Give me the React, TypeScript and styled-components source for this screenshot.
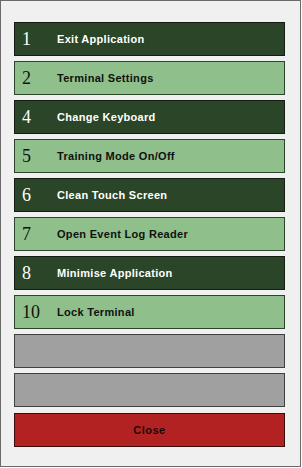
import React from 'react'
import styled, { createGlobalStyle } from 'styled-components'

const GlobalStyle = createGlobalStyle`
  html, body {
    margin: 0;
    padding: 0;
    background: #ffffff;
  }
`

type Tone = 'dark' | 'light' | 'empty'

const tones = {
  dark: { bg: '#2a4528', border: '#131d12', color: '#ffffff' },
  light: { bg: '#8fbf8b', border: '#2c442a', color: '#111111' },
  empty: { bg: '#a0a0a0', border: '#404040', color: '#111111' },
}

const Frame = styled.div`
  box-sizing: border-box;
  width: 301px;
  height: 467px;
  border: 1px solid #6a6a6a;
  background: #f0f0f0;
  padding: 21px 15px 0 13px;
  display: flex;
  flex-direction: column;
  gap: 5px;
`

const MenuButton = styled.div<{ $tone: Tone }>`
  box-sizing: border-box;
  height: 34px;
  display: flex;
  align-items: center;
  background: ${({ $tone }) => tones[$tone].bg};
  border: 1px solid ${({ $tone }) => tones[$tone].border};
  color: ${({ $tone }) => tones[$tone].color};
  cursor: pointer;
`

const Number = styled.span`
  box-sizing: border-box;
  flex: 0 0 42px;
  padding-left: 7px;
  font-family: 'Liberation Serif', serif;
  font-size: 18px;
  line-height: 1;
`

const Label = styled.span`
  font-family: 'Liberation Sans', Arial, sans-serif;
  font-weight: bold;
  font-size: 11px;
  letter-spacing: 0.3px;
`

const CloseButton = styled.div`
  box-sizing: border-box;
  height: 34px;
  margin-top: 1px;
  display: flex;
  align-items: center;
  justify-content: center;
  background: #b22222;
  border: 1px solid #3a0c0c;
  color: #1a0808;
  font-family: 'Liberation Sans', Arial, sans-serif;
  font-weight: bold;
  font-size: 11px;
  letter-spacing: 0.5px;
  cursor: pointer;
`

const items: { num?: string; label?: string; tone: Tone }[] = [
  { num: '1', label: 'Exit Application', tone: 'dark' },
  { num: '2', label: 'Terminal Settings', tone: 'light' },
  { num: '4', label: 'Change Keyboard', tone: 'dark' },
  { num: '5', label: 'Training Mode On/Off', tone: 'light' },
  { num: '6', label: 'Clean Touch Screen', tone: 'dark' },
  { num: '7', label: 'Open Event Log Reader', tone: 'light' },
  { num: '8', label: 'Minimise Application', tone: 'dark' },
  { num: '10', label: 'Lock Terminal', tone: 'light' },
  { tone: 'empty' },
  { tone: 'empty' },
]

export default function App() {
  return (
    <>
      <GlobalStyle />
      <Frame>
        {items.map((item, i) => (
          <MenuButton key={i} $tone={item.tone}>
            {item.num && <Number>{item.num}</Number>}
            {item.label && <Label>{item.label}</Label>}
          </MenuButton>
        ))}
        <CloseButton>Close</CloseButton>
      </Frame>
    </>
  )
}
